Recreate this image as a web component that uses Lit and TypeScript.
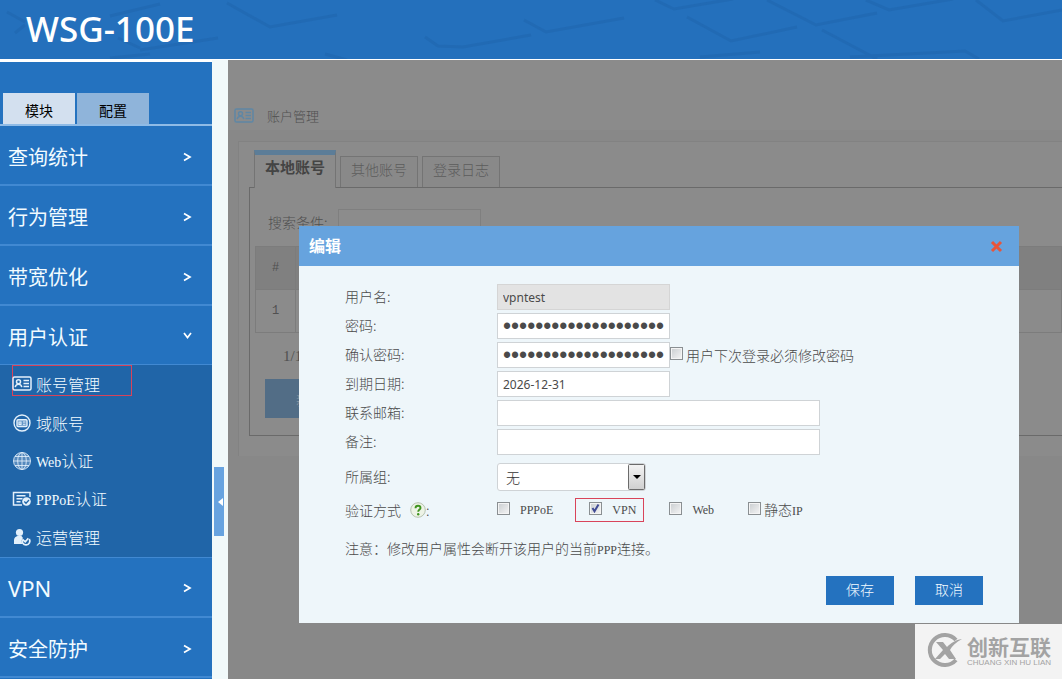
import { LitElement, html, svg, css } from "lit";
import { customElement, state } from "lit/decorators.js";
import { classMap } from "lit/directives/class-map.js";

const cardIcon = svg`<g fill="none" stroke="currentColor" stroke-width="1.5">
  <rect x="1" y="3" width="18" height="13" rx="1.5"/>
  <circle cx="6.5" cy="7.8" r="2"/>
  <path d="M3.2 13.2c.4-2 1.6-3 3.3-3s2.9 1 3.3 3M11.5 6.5h5.5M11.5 9.5h5.5M11.5 12.5h5.5"/></g>`;
const domainIcon = svg`<g fill="none" stroke="currentColor" stroke-width="1.4">
  <circle cx="10" cy="10" r="8"/>
  <rect x="5" y="6.7" width="10" height="6.8" rx="1" fill="currentColor" fill-opacity=".35"/>
  <path d="M7 9h2v2.400h-2zM11 9h2.500M11 11.300h2.500" stroke-width="1.100"/></g>`;
const globeIcon = svg`<circle cx="10" cy="10" r="8.500" fill="#b9cfe6" fill-opacity=".35"/>
  <g fill="none" stroke="currentColor" stroke-width="1" stroke-opacity=".85">
  <circle cx="10" cy="10" r="8.500"/><ellipse cx="10" cy="10" rx="4.300" ry="8.500"/>
  <path d="M10 1.500v17M1.500 10h17M3 5.500h14M3 14.500h14"/></g>`;
const listIcon = svg`<g fill="none" stroke="currentColor" stroke-width="1.5">
  <path d="M18 8V3.500H1.500v12.500H10M4.500 6.800h9M4.500 9.800h6M4.500 12.800h4"/></g>
  <circle cx="14.500" cy="12.500" r="4.300" fill="currentColor"/>
  <path d="M12.300 12.500l1.700 1.700 3-3.200" fill="none" stroke="#2065a8" stroke-width="1.300"/>`;
const operatorIcon = svg`<circle cx="7.500" cy="5.500" r="3.600" fill="currentColor"/>
  <path d="M2 17V13c0-2.500 2-3.500 3.500-4h4L11 11l-2 3 1.500 3z" fill="currentColor"/>
  <path d="M17.300 12a3.900 3.900 0 1 1-7 .6M10.500 12.500l2.800 2.300 3-3.500" fill="none" stroke="currentColor" stroke-width="1.700"/>`;

type Part = { cjk?: string; latin?: string };
const SUBMENU: (Part & { icon: unknown; marked?: boolean })[] = [
  { icon: cardIcon, cjk: "账号管理", marked: true },
  { icon: domainIcon, cjk: "域账号" },
  { icon: globeIcon, latin: "Web", cjk: "认证" },
  { icon: listIcon, latin: "PPPoE", cjk: "认证" },
  { icon: operatorIcon, cjk: "运营管理" },
];

@customElement("side-menu")
export class SideMenu extends LitElement {
  static styles = css`
    :host { display: block; background: #2472bf; color: #f2fbff; border-top: 2px solid #fff; overflow: hidden; }
    .tabs { display: flex; gap: 2px; padding: 31px 3px 0; border-bottom: 2px solid #8fbbe6; }
    .tab { width: 72px; height: 31px; padding: 2px 0 0; border: 0; background: #8fb4da; color: #000; font: 14px/20px "Noto Sans CJK SC", sans-serif; }
    .tab.on { background: #d3e0ef; }
    .item { display: flex; align-items: center; justify-content: space-between; box-sizing: border-box; width: 100%; height: 60px; padding: 4px 20px 0 8px; border: 0; border-bottom: 2px solid #4189d2; background: none; color: inherit; font: 20px/28px "Noto Sans CJK SC", sans-serif; text-align: left; }
    .item.latin { padding-top: 2px; font-family: "Noto Sans", sans-serif; font-size: 22px; }
    .arrow { width: 10px; height: 10px; }
    .sub { display: flex; flex-direction: column; margin: -1px 0 0; padding: 0 0 1px; list-style: none; background: #2065a8; border-bottom: 1px solid #4189d2; }
    .link { display: flex; align-items: center; box-sizing: border-box; width: 120px; height: 38px; gap: 4px; margin-left: 12px; color: inherit; text-decoration: none; white-space: nowrap; font: 16px/24px "Noto Sans CJK SC", sans-serif; font-weight: 300; }
    .marked { height: 31px; margin-bottom: 8px; padding-top: 6px; border: 1px solid #d8435a; }
    .marked .icon { margin-left: -1px; }
    .icon { width: 20px; height: 20px; flex: none; color: #e3f0fb; }
    .en { font-family: "Liberation Serif", serif; font-size: 14px; }
  `;
  @state() private tab = 0;

  private item(text: string, open = false) {
    return html`<button class=${classMap({ item: true, latin: text === "VPN" })}>
      <span>${text}</span>
      <svg class="arrow" viewBox="0 0 10 10" fill="none" stroke="#fff" stroke-width="1.700">
        <path d=${open ? "M2 1l3.500 4.500L9 1" : "M2 1.500l6 3.500-6 3.500"}></path></svg>
    </button>`;
  }
  render() {
    return html`
      <div class="tabs">${["模块", "配置"].map((t, i) => html`
        <button class=${classMap({ tab: true, on: this.tab === i })} @click=${() => (this.tab = i)}>${t}</button>`)}
      </div>
      <nav>
        ${["查询统计", "行为管理", "带宽优化"].map((t) => this.item(t))}
        ${this.item("用户认证", true)}
        <ul class="sub">${SUBMENU.map((s) => html`<li>
          <a href="#" class=${classMap({ link: true, marked: !!s.marked })}>
            <svg class="icon" viewBox="0 0 20 20">${s.icon}</svg>
            <span>${s.latin ? html`<span class="en">${s.latin}</span>` : ""}${s.cjk}</span></a></li>`)}
        </ul>
        ${["VPN", "安全防护"].map((t) => this.item(t))}
      </nav>`;
  }
}

@customElement("account-page")
export class AccountPage extends LitElement {
  static styles = css`
    :host { display: block; background: #888; color: #505050; font: 14px/20px "Noto Sans CJK SC", sans-serif; font-weight: 300; overflow: hidden; }
    .crumb { display: flex; align-items: center; gap: 13px; box-sizing: border-box; height: 70px; padding: 42px 6px 0; background: #8b8b8b; font-size: 13px; }
    .crumb svg { width: 20px; height: 20px; color: #5f87a5; }
    .panel { margin: 11px 0 0 10px; padding: 8px 0 20px 10px; border: 1px solid #828282; border-right: 0; border-bottom: 0; background: #8b8b8b; }
    .tabs { display: flex; align-items: flex-end; gap: 4px; padding-left: 5px; }
    .tab { box-sizing: border-box; width: 78px; height: 31px; padding: 0 0 7px; border: 1px solid #747474; border-bottom: 0; background: #898989; color: #5c5c5c; font: inherit; }
    .tab.on { width: 82px; height: 38px; margin-bottom: -1px; padding-bottom: 10px; border-top: 5px solid #5c7d98; background: #8b8b8b; color: #444; font-size: 15px; font-weight: 700; }
    .box { padding: 21px 0 17px 5px; border: 1px solid #6a6a6a; border-right: 0; }
    .search { display: flex; gap: 10px; padding-left: 13px; align-items: center; height: 26px; }
    .search input { box-sizing: border-box; width: 143px; height: 26px; border: 1px solid #7f7f7f; background: #8c8c8c; }
    table { width: 100%; margin-top: 11px; border-collapse: collapse; font: 12px/20px "Liberation Mono", monospace; }
    th, td { box-sizing: border-box; height: 43px; padding: 0; border: 1px solid #7c7c7c; font-weight: 400; }
    th { background: #808080; }
    .num { width: 40px; text-align: center; }
    .pager { padding: 13px 28px; font-family: "Liberation Serif", serif; font-size: 15px; }
    .add { width: 90px; height: 39px; margin-left: 10px; border: 0; background: #526d86; color: #8e9aa4; font: inherit; }
  `;
  render() {
    return html`
      <div class="crumb"><svg viewBox="0 0 20 20">${cardIcon}</svg><span>账户管理</span></div>
      <section class="panel">
        <div class="tabs"><button class="tab on">本地账号</button><button class="tab">其他账号</button><button class="tab">登录日志</button></div>
        <div class="box">
          <div class="search"><label for="q">搜索条件:</label><input id="q"></div>
          <table>
            <thead><tr><th class="num">#</th><th></th></tr></thead>
            <tbody><tr><td class="num">1</td><td></td></tr></tbody>
          </table>
          <div class="pager">1/1</div>
          <button class="add">新增</button>
        </div>
      </section>`;
  }
}

@customElement("edit-dialog")
export class EditDialog extends LitElement {
  static styles = css`
    :host { display: block; background: #eef6fa; color: #4a4a4a; font: 14px/20px "Noto Sans CJK SC", sans-serif; font-weight: 300; }
    .head { display: flex; align-items: center; justify-content: space-between; height: 40px; padding: 0 16px 0 10px; background: #66a3de; color: #fff; }
    h2 { margin: 0; padding-bottom: 2px; font-size: 16px; line-height: 24px; font-weight: 700; }
    .close { display: flex; padding: 0; border: 0; background: none; }
    .close svg { width: 13px; height: 13px; }
    form { padding: 18px 36px 18px 46px; }
    .row { display: grid; grid-template-columns: 152px 1fr; align-items: center; margin-bottom: 3px; }
    .row > label { padding-bottom: 3px; }
    .field { display: flex; align-items: center; }
    .text { box-sizing: border-box; width: 173px; height: 26px; padding: 0 5px; border: 1px solid #cfd3d6; background: #fff; color: #4a4a4a; font: 12px/20px "Noto Sans", sans-serif; }
    .text.wide { width: 323px; }
    .text:disabled { background: #e3e3e3; border-color: #d5d5d5; }
    .text[type="password"] { font: 23px/24px "Liberation Sans", sans-serif; }
    .group { margin: 8px 0 7px; }
    .pick { display: grid; width: 149px; height: 28px; }
    .pick > * { grid-area: 1 / 1; }
    select { appearance: none; box-sizing: border-box; width: 149px; height: 28px; padding: 0 24px 0 8px; border: 1px solid #cfd3d6; border-radius: 3px; background: #fff; color: #333; font: inherit; }
    .drop { justify-self: end; width: 18px; height: 28px; pointer-events: none; }
    .auth { margin: 0; }
    .name { display: flex; align-items: center; gap: 9px; }
    .name svg { width: 16px; height: 16px; }
    .q { display: inline-flex; align-items: center; }
    .check { display: flex; align-items: center; gap: 10px; box-sizing: border-box; height: 24px; }
    .check.tight { gap: 3px; }
    .check.marked { margin: 0 25px 0 22px; padding: 0 7px 0 13px; border: 1px solid #d9445a; }
    .check.ip { margin-left: 34px; }
    input[type="checkbox"] { appearance: none; flex: none; box-sizing: border-box; width: 13px; height: 13px; margin: 0 0 3px; border: 1px solid #8a8f92; outline: 1px solid #f4f4f4; outline-offset: -2px; background: linear-gradient(135deg, #c9cdd0, #f5f5f5); }
    input[type="checkbox"]:checked { background: url("data:image/svg+xml,%3Csvg xmlns='http://www.w3.org/2000/svg' viewBox='0 0 11 11'%3E%3Cpath d='M2.500 5l2 3.300L8.500 1.500' fill='none' stroke='%23404a94' stroke-width='2'/%3E%3C/svg%3E"), linear-gradient(135deg, #c9cdd0, #f5f5f5); }
    .en { font-family: "Liberation Serif", serif; font-size: 12px; }
    .note { margin: 16px 0; }
    .actions { display: flex; justify-content: flex-end; gap: 21px; }
    .btn { width: 68px; height: 29px; padding: 0 0 3px; border: 0; background: #2472bf; color: #f2fbff; font: inherit; }
  `;
  private text(id: string, label: string, value: string, type = "text", cls = "", disabled = false, extra: unknown = "") {
    return html`<div class="row"><label for=${id}>${label}:</label>
      <div class="field"><input id=${id} class="text ${cls}" type=${type} .value=${value} ?disabled=${disabled}>${extra}</div></div>`;
  }
  render() {
    return html`
      <div class="head"><h2>编辑</h2>
        <button class="close" aria-label="关闭"><svg viewBox="0 0 13 13"><path d="M2 2l9 9M11 2l-9 9" stroke="#e8543a" stroke-width="3"></path></svg></button></div>
      <form @submit=${(e: Event) => e.preventDefault()}>
        ${this.text("user", "用户名", "vpntest", "text", "", true)}
        ${this.text("pw", "密码", "********************", "password")}
        ${this.text("pw2", "确认密码", "********************", "password", "", false,
          html`<label class="check tight"><input type="checkbox">用户下次登录必须修改密码</label>`)}
        ${this.text("date", "到期日期", "2026-12-31")}
        ${this.text("mail", "联系邮箱", "", "text", "wide")}
        ${this.text("memo", "备注", "", "text", "wide")}
        <div class="row group"><label for="group">所属组:</label>
          <div class="pick"><select id="group"><option>无</option></select>
            <svg class="drop" viewBox="0 0 18 28">
              <defs><linearGradient id="g" x2="0" y2="1"><stop stop-color="#f4f4f4"/><stop offset="1" stop-color="#cfcfcf"/></linearGradient></defs>
              <rect x=".5" y="1.500" width="16" height="25" rx="1" fill="url(#g)" stroke="#6b6b6b"/><path d="M5 12h8l-4 4z"/></svg></div></div>
        <div class="row auth"><div class="name"><span>验证方式</span><span class="q">
            <svg viewBox="0 0 16 16"><circle cx="8" cy="8" r="7.300" fill="#edf3e6" stroke="#b7c3b0"/>
              <path d="M5.500 6.200C5.500 4.600 6.500 3.700 8 3.700s2.500.9 2.500 2.200C10.500 7.500 8.200 7.700 8.200 9.800" fill="none" stroke="#3f9420" stroke-width="1.900"/><circle cx="8.200" cy="12.200" r="1.200" fill="#3f9420"/></svg>:</span></div>
          <div class="field">
            <label class="check"><input type="checkbox"><span class="en">PPPoE</span></label>
            <label class="check marked"><input type="checkbox" checked><span class="en">VPN</span></label>
            <label class="check"><input type="checkbox"><span class="en">Web</span></label>
            <label class="check tight ip"><input type="checkbox"><span>静态<span class="en">IP</span></span></label>
          </div></div>
        <p class="note">注意：修改用户属性会断开该用户的当前<span class="en">PPP</span>连接。</p>
        <div class="actions"><button class="btn">保存</button><button class="btn">取消</button></div>
      </form>`;
  }
}

@customElement("app-root")
export class AppRoot extends LitElement {
  static styles = css`
    :host { display: flex; flex-direction: column; position: relative; height: 100vh; overflow: hidden; background: #f1f9fa; }
    header { display: grid; flex: none; height: 59px; background: #2470bc; border-bottom: 1px solid #fff; overflow: hidden; }
    header > * { grid-area: 1 / 1; }
    .pattern { width: 100%; height: 59px; }
    h1 { margin: 0; padding-left: 26px; color: #fff; font: 500 35px/58px "Noto Sans", sans-serif; }
    .body { display: grid; grid-template-columns: 212px 16px 1fr; flex: 1; min-height: 0; }
    .gutter { padding: 407px 4px 0 2px; }
    .handle { display: flex; align-items: center; justify-content: flex-end; width: 10px; height: 69px; padding: 0; border: 0; background: #67a3e0; }
    .handle svg { width: 6px; height: 10px; }
    .stage { display: grid; position: relative; min-width: 0; }
    .dialog { position: absolute; top: 166px; left: 71px; width: 720px; }
    .brand { position: absolute; right: 0; bottom: 0; display: flex; align-items: center; gap: 4px; box-sizing: border-box; width: 147px; height: 55px; padding: 0 0 4px 11px; background: #f3f3f3; color: #a3a3a3; }
    .brand svg { width: 37px; height: 36px; flex: none; }
    .words { display: flex; flex-direction: column; white-space: nowrap; font: 700 21px/26px "Noto Sans CJK SC", sans-serif; }
    .small { font: 8px/8px "Liberation Sans", sans-serif; }
  `;
  render() {
    return html`
      <header>
        <svg class="pattern" viewBox="0 0 1062 59" preserveAspectRatio="xMinYMin slice" fill="none" stroke="#1f62a8" stroke-width="3" stroke-opacity=".4">
          <path d="M425 37l13 9 25 1 68-12M524 20l22 12 78-14M655 0l19 9 59-10M687 17l44 24 66-14M767 0l49 25 61-12M866 0l23 10 64-11M976 0l27 21 59-11M822 30l55 29M700 57l60-5M850 57l115-6 14 8"></path>
          <path d="M7 12l18 10M15 33l10-8M110 16l50-12M118 38l22 10M140 50l78-12M227 3l43 24 67-12M325 54l22 6M110 58l40-4"></path>
        </svg>
        <h1>WSG-100E</h1>
      </header>
      <div class="body">
        <side-menu></side-menu>
        <div class="gutter"><button class="handle" aria-label="收起"><svg viewBox="0 0 6 10"><path d="M5 1v8L0 5z" fill="#fff"></path></svg></button></div>
        <main class="stage"><account-page></account-page><edit-dialog class="dialog"></edit-dialog></main>
      </div>
      <aside class="brand">
        <svg viewBox="0 0 37 36"><path d="M30 8A15 15 0 1 0 30 28" fill="none" stroke="#a3a3a3" stroke-width="4"></path>
          <path d="M10 10h7l4 5c4-4 8-7 15-8-6 3-10 7-12 11l6 9h-7l-4-5-5 5H9l8-9z" fill="#a3a3a3"></path></svg>
        <div class="words"><span>创新互联</span><span class="small">CHUANG XIN HU LIAN</span></div>
      </aside>`;
  }
}
